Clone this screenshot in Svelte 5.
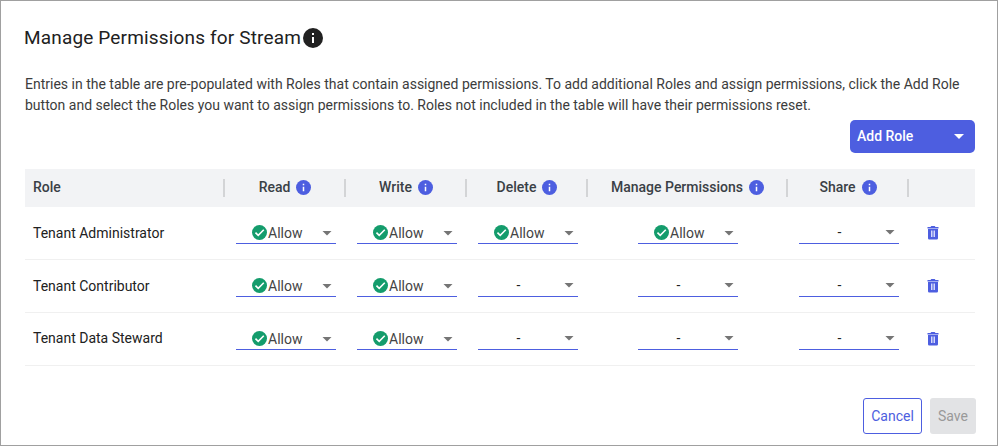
<script>
  const permissions = ['Read', 'Write', 'Delete', 'Manage Permissions', 'Share'];
  const roles = [
    { name: 'Tenant Administrator', allowed: [true, true, true, true, false] },
    { name: 'Tenant Contributor', allowed: [true, true, false, false, false] },
    { name: 'Tenant Data Steward', allowed: [true, true, false, false, false] }
  ];
</script>

{#snippet info()}
  <svg class="info" viewBox="2 2 20 20" aria-hidden="true">
    <path fill="currentColor" d="M12 2a10 10 0 1 0 0 20 10 10 0 0 0 0-20z" />
    <path class="glyph" d="M11 7h2v2h-2zM11 11h2v6h-2z" />
  </svg>
{/snippet}

<main class="dialog">
  <h1><span>Manage Permissions for Stream</span>{@render info()}</h1>
  <p>
    Entries in the table are pre-populated with Roles that contain assigned permissions. To add additional Roles and assign permissions, click the Add Role<br />
    button and select the Roles you want to assign permissions to. Roles not included in the table will have their permissions reset.
  </p>

  <div class="toolbar">
    <button class="add"><span>Add Role</span><i class="caret"></i></button>
  </div>

  <section class="table">
    <div class="row head">
      <div class="cell name">Role</div>
      {#each permissions as permission}
        <div class="cell"><span>{permission}</span>{@render info()}</div>
      {/each}
      <div class="cell last"></div>
    </div>
    {#each roles as role}
      <div class="row">
        <div class="name">{role.name}</div>
        {#each role.allowed as allowed}
          <div class="slot">
            <div class="select" class:empty={!allowed}>
              <div class="value">
                {#if allowed}
                  <svg class="check" viewBox="2 2 20 20" aria-hidden="true">
                    <circle cx="12" cy="12" r="10" fill="#149c6c" />
                    <path d="M6.6 12.2l3.7 3.7 7.4-7.5" fill="none" stroke="#fff" stroke-width="2.1" />
                  </svg><span>Allow</span>
                {:else}
                  <span>-</span>
                {/if}
              </div>
              <i class="caret"></i>
            </div>
          </div>
        {/each}
        <div class="action">
          <svg class="trash" viewBox="0 0 12 14" aria-hidden="true">
            <path fill="#4d5ee0" d="M0.5 1h3l.8-1h3.4l.8 1h3v1.6h-11zM1 3h10v9.2a1.3 1.3 0 0 1-1.3 1.3H2.3A1.3 1.3 0 0 1 1 12.2z" />
            <path fill="#d5d9fa" d="M4 4.5h1.5v6.5H4zM6.5 4.5H8v6.5H6.5z" />
          </svg>
        </div>
      </div>
    {/each}
  </section>

  <footer>
    <button class="cancel">Cancel</button>
    <button class="save" disabled>Save</button>
  </footer>
</main>

<style>
  .dialog {
    box-sizing: border-box;
    width: 998px;
    height: 446px;
    border: 1px solid #a0a0a0;
    background: #fff;
    padding: 25px 22px 0 24px;
    font-family: Roboto, sans-serif;
    font-size: 14px;
    color: #212121;
    overflow: hidden;
  }
  h1 {
    display: flex;
    align-items: center;
    gap: 2px;
    margin: 0 0 0 -1px;
    height: 24px;
    font-size: 19px;
    line-height: 24px;
    font-weight: 400;
    letter-spacing: 0.16px;
    color: #212121;
    white-space: nowrap;
  }
  h1 .info {
    width: 20px;
    height: 20px;
  }
  .glyph {
    fill: #fff;
  }
  p {
    margin: 24px 0 0;
    height: 46px;
    line-height: 21px;
    color: #3c3c3c;
    white-space: nowrap;
  }
  button {
    font: inherit;
    box-sizing: border-box;
    padding: 0;
    border: 0;
  }
  .toolbar {
    display: flex;
    justify-content: flex-end;
    width: 950px;
  }
  .add {
    display: flex;
    align-items: center;
    justify-content: space-between;
    width: 125px;
    height: 33px;
    padding: 0 11px 0 7px;
    border-radius: 5px;
    background: #4d5ee0;
    color: #fff;
    font-weight: 500;
  }
  .add span {
    margin-top: -1px;
  }
  .caret {
    width: 10px;
    height: 5px;
    background: currentColor;
    clip-path: polygon(0 0, 100% 0, 50% 100%);
  }
  .table {
    width: 950px;
    margin-top: 16px;
  }
  .row {
    display: grid;
    grid-template-columns: 200px 121px 121px 121px 200px 121px 66px;
    box-sizing: border-box;
    height: 53px;
    border-bottom: 1px solid #f0f0f0;
  }
  .head {
    height: 38px;
    border: 0;
    background: #f2f3f5;
    align-items: center;
    font-weight: 500;
    color: #3a4046;
  }
  .cell {
    display: flex;
    align-items: center;
    justify-content: center;
    gap: 6px;
    box-sizing: border-box;
    height: 18px;
    padding: 0 0 2px 1px;
    border-right: 2px solid #d3d4d6;
    line-height: 16px;
  }
  .cell .info {
    width: 15px;
    height: 15px;
    color: #4d5ee0;
  }
  .cell.last {
    border: 0;
  }
  .name {
    padding-left: 8px;
    line-height: 52px;
  }
  .row:last-child .name {
    line-height: 50px;
  }
  .cell.name {
    justify-content: flex-start;
    padding-left: 8px;
    line-height: 16px;
  }
  .slot {
    display: flex;
    justify-content: center;
    padding-left: 1px;
  }
  .slot:nth-child(5) {
    padding-left: 0;
  }
  .select {
    display: flex;
    align-items: center;
    box-sizing: border-box;
    width: 100px;
    height: 22px;
    margin-top: 15px;
    padding: 1px 4px 0 0;
    border-bottom: 1px solid #4d5ee0;
    color: #444;
  }
  .select.empty {
    padding-top: 0;
    padding-bottom: 1px;
  }
  .value {
    display: flex;
    align-items: center;
    flex: 1;
    padding-left: 16px;
  }
  .empty .value {
    justify-content: center;
    padding: 0 5px 0 0;
    color: #212121;
  }
  .check {
    width: 15px;
    height: 15px;
    margin: -1px 1px 0 0;
  }
  .select .caret {
    color: #757575;
  }
  .action {
    padding: 19px 0 0 18px;
  }
  .trash {
    display: block;
    width: 12px;
    height: 14px;
  }
  footer {
    display: flex;
    justify-content: flex-end;
    gap: 8px;
    margin-top: 32px;
    width: 951px;
  }
  footer button {
    height: 36px;
    border-radius: 3px;
  }
  .cancel {
    width: 59px;
    border: 1px solid #4d5ee0;
    background: #fff;
    color: #4d5ee0;
  }
  .save {
    width: 46px;
    background: #e2e3e5;
    color: #999;
  }
</style>
